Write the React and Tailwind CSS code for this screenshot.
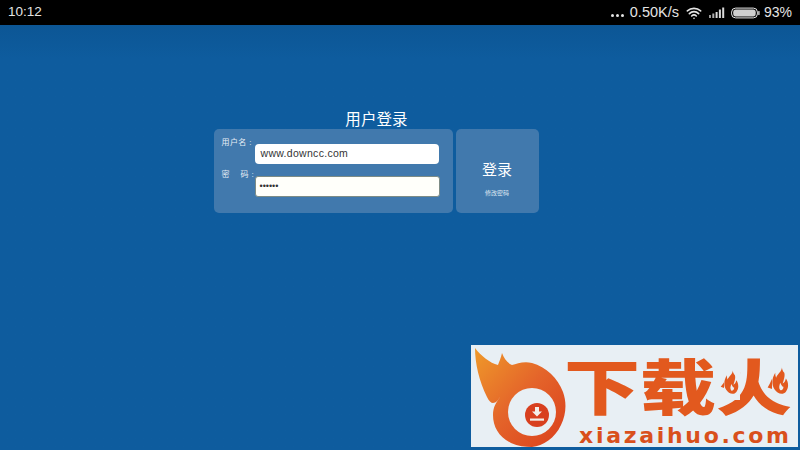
import React from 'react';
import { Wifi } from 'lucide-react';

const cjk = '"Liberation Sans", "Noto Sans CJK SC", sans-serif';

function SignalBars() {
  return (
    <svg width="16" height="12" viewBox="0 0 16 12" className="fill-[#d8d8d8]">
      <rect x="0" y="8" width="2" height="3" opacity="0.7" />
      <rect x="3.3" y="6.5" width="2" height="4.5" opacity="0.8" />
      <rect x="6.6" y="5" width="2" height="6" />
      <rect x="9.9" y="2.5" width="2" height="8.5" />
      <rect x="13.2" y="0.5" width="2" height="10.5" />
    </svg>
  );
}

function Battery() {
  return (
    <svg width="29" height="12" viewBox="0 0 29 12">
      <rect x="0.6" y="1.1" width="25.8" height="9.8" rx="4" fill="none" stroke="#e8e8e8" strokeWidth="1" />
      <rect x="2.2" y="2.6" width="22.5" height="6.8" rx="2.6" fill="#cfcfcf" />
      <rect x="27.2" y="4" width="1.4" height="4" rx="0.6" fill="#d8d8d8" />
    </svg>
  );
}

function StatusBar() {
  return (
    <div className="h-[25px] bg-black flex items-center justify-between pl-[8px] pr-[8px] text-[#e4e4e4] text-[13.5px] font-['Liberation_Sans',sans-serif]">
      <span>10:12</span>
      <div className="flex items-center">
        <div className="flex gap-[2px] items-end h-[9px] mr-[6px] pt-[5px]">
          <span className="w-[3px] h-[3px] rounded-full bg-[#e4e4e4]" />
          <span className="w-[3px] h-[3px] rounded-full bg-[#e4e4e4]" />
          <span className="w-[3px] h-[3px] rounded-full bg-[#e4e4e4]" />
        </div>
        <span className="text-[14.5px]">0.50K/s</span>
        <Wifi size={16} strokeWidth={2.4} className="ml-[7px] text-[#e4e4e4]" />
        <div className="ml-[7px]"><SignalBars /></div>
        <div className="ml-[6px]"><Battery /></div>
        <span className="ml-[4px] text-[14px]">93%</span>
      </div>
    </div>
  );
}

function FieldRow({ label, children }) {
  return (
    <div className="flex">
      <span className="w-[41px] pl-[8px] text-[8px] leading-[10px] text-[#e8eef5] whitespace-pre shrink-0 tracking-[0.4px]">{label}</span>
      {children}
    </div>
  );
}

function LoginForm() {
  return (
    <div className="flex flex-col items-center mt-[85px] ml-[-48px]">
      <div className="text-[15.5px] leading-[19px] text-white tracking-[0.1px] ml-[1px]">用户登录</div>
      <div className="flex gap-[3px]">
        <div className="w-[239px] h-[84px] rounded-[5px] bg-[#4179ad] pt-[9px] flex flex-col gap-[6px]">
          <FieldRow label="用户名 :">
            <div className="w-[184px] h-[20px] mt-[6px] rounded-[4px] bg-white flex items-center pl-[6px] text-[10.5px] text-[#333] font-['Liberation_Sans',sans-serif] tracking-[0.3px]">
              www.downcc.com
            </div>
          </FieldRow>
          <FieldRow label={'密    码 :'}>
            <div className="w-[185px] h-[21px] mt-[6px] rounded-[3px] bg-[#fffffa] border-[1.5px] border-[#7d8c86] flex items-center pl-[4px] text-[9px] text-[#333] font-['Liberation_Sans',sans-serif]">
              ••••••
            </div>
          </FieldRow>
        </div>
        <div className="w-[83px] h-[84px] rounded-[5px] bg-[#4179ad] flex flex-col items-center pt-[31px]">
          <div className="text-[15px] leading-[20px] text-white">登录</div>
          <div className="text-[6px] leading-[8px] text-[#dfe8f2] mt-[9px]">修改密码</div>
        </div>
      </div>
    </div>
  );
}

function FlameMark() {
  return (
    <svg width="96" height="102" viewBox="0 0 96 102" className="shrink-0">
      <defs>
        <linearGradient id="flame" x1="0" y1="0" x2="1" y2="1">
          <stop offset="0" stopColor="#ef9a2a" />
          <stop offset="0.5" stopColor="#e4642a" />
          <stop offset="1" stopColor="#da3f1c" />
        </linearGradient>
      </defs>
      <path
        d="M4 3 C4 18 8 36 16 52 C18 56 20 58 22 58 C25 58 27 55 29 52 C25 58 22 62 22 70 C22 82 28 92 40 98 C47 101 54 102 61 102 C72 101 84 93 90 80 C95 70 96 58 92 47 C87 33 75 22 61 18 C52 16 46 19 41 20 C36 18 33 13 31 8 C30 13 28 17 27 20 C19 18 10 11 4 3 Z"
        fill="url(#flame)"
      />
      <circle cx="61" cy="67" r="24" fill="#e8eff4" />
      <circle cx="66" cy="70" r="12" fill="#d8401f" />
      <path d="M64 62 h4 v4.5 h3 l-5 5 l-5 -5 h3 Z" fill="#f4efe9" />
      <rect x="59" y="73.5" width="14" height="2.2" fill="#f4efe9" />
    </svg>
  );
}

function SmallFlame({ width, height }) {
  return (
    <svg width={width} height={height} viewBox="0 0 22 36" className="bg-[#e8eff4]">
      <path
        d="M12 0 C13 6 7 9 5 14 C4 11 4 10 4 8 C0 14 -1 22 3 28 C6 33 13 36 17 31 C21 26 20 19 17 15 C16 19 15 20 13 21 C15 15 16 11 15 8 C13 6 12 3 12 0 Z M10 20 C9 24 8 26 10 29 C12 30 14 28 14 25 C13 25 12 24 10 20 Z"
        fill="#e2591e"
        fillRule="evenodd"
      />
    </svg>
  );
}

function Watermark() {
  return (
    <div className="absolute left-[471px] top-[345px] w-[327px] h-[102px] bg-[#e8eff4] flex">
      <FlameMark />
      <div className="relative flex-1">
        <div className="absolute left-[-3px] top-[14px] flex text-[#e2591e] font-black text-[76px] leading-[62px] font-['Noto_Sans_CJK_SC',sans-serif] whitespace-nowrap scale-y-[0.8] origin-top">
          下载火
        </div>
        <div className="absolute left-[157px] top-[20px]"><SmallFlame width={16} height={35} /></div>
        <div className="absolute left-[205px] top-[20px]"><SmallFlame width={18} height={32} /></div>
        <div className="absolute left-[12px] top-[81px] text-[#d9501c] font-bold text-[22px] leading-[20px] tracking-[2.7px] font-['DejaVu_Sans',sans-serif] whitespace-nowrap">
          xiazaihuo.com
        </div>
      </div>
    </div>
  );
}

export default function App() {
  return (
    <div className="relative w-[800px] h-[450px] overflow-hidden bg-[#0e5a9c] flex flex-col" style={{ fontFamily: cjk }}>
      <StatusBar />
      <div className="flex-1 flex justify-center bg-gradient-to-b from-[#0c5695] to-[#0e5c9e] to-[8%]">
        <LoginForm />
      </div>
      <Watermark />
    </div>
  );
}
